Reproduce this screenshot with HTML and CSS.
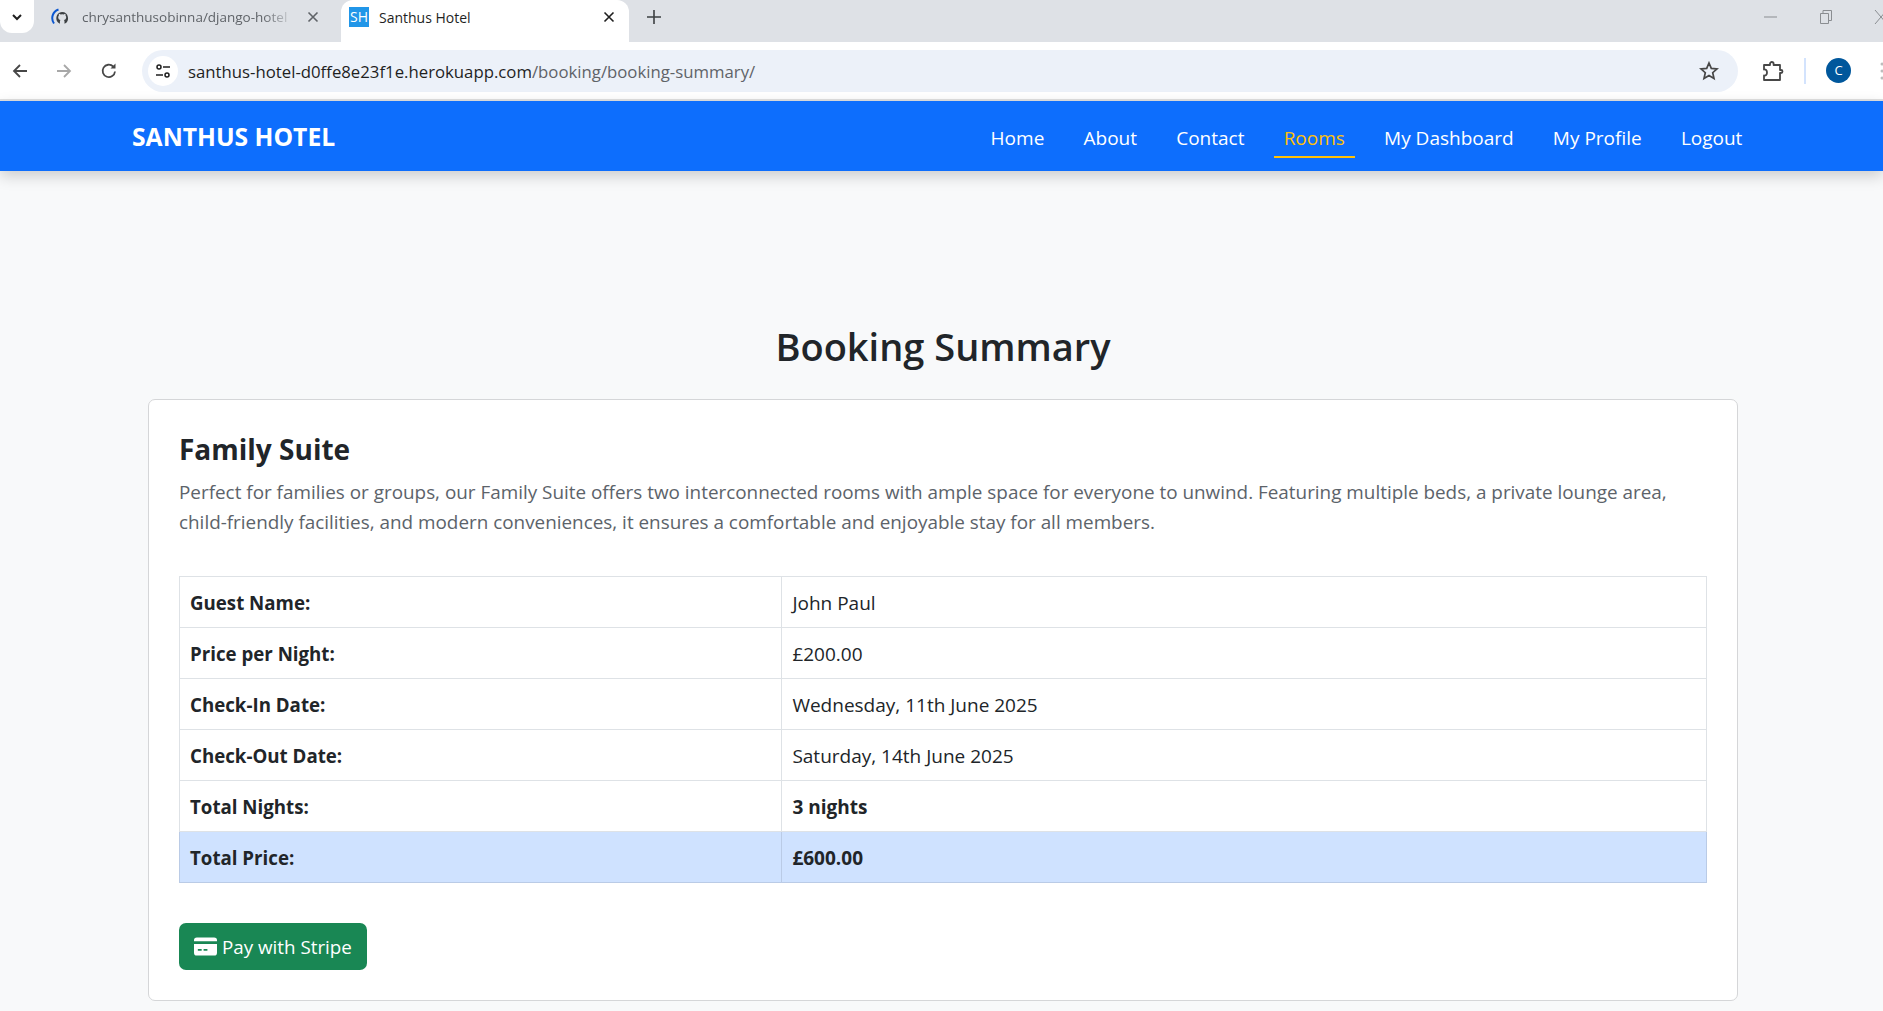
FILE: index.html
```html
<!DOCTYPE html>
<html lang="en">
  <head>
    <meta charset="UTF-8" />
    <meta name="viewport" content="width=device-width, initial-scale=1.0" />
    <title>Santhus Hotel</title>
    <link rel="stylesheet" href="styles.css">
  </head>

  <body>
    <!-- browser chrome -->
    <div class="tabstrip">
      <div class="tab-search">
        <svg width="14" height="14" viewBox="0 0 14 14"><path d="M3 5l4 4 4-4" fill="none" stroke="#1f1f1f" stroke-width="2"/></svg>
      </div>
      <div class="tab">
        <svg class="tab-icon" width="18" height="18" viewBox="0 0 18 18">
          <path d="M3 15.500C-0.500 10.500 1.500 3.500 7.500 1.500" fill="none" stroke="#0b57d0" stroke-width="2"/>
          <path d="M11 4a6.200 6.200 0 0 1 2.500 11.800v-2.300c0-.8-.3-1.300-.7-1.600 1.500-.2 2.400-1 2.400-2.700 0-.8-.3-1.400-.7-1.800.1-.5.1-1.100-.1-1.600-.6 0-1.200.3-1.700.6a6 6 0 0 0-3 0c-.5-.3-1.100-.6-1.700-.6-.2.5-.2 1.100-.1 1.600-.4.400-.7 1-.7 1.800 0 1.700.9 2.500 2.400 2.700-.4.300-.7.800-.7 1.600v2.300A6.200 6.200 0 0 1 11 4z" fill="#3c4043"/>
        </svg>
        <span class="tab-title tab-title-cut">chrysanthusobinna/django-hotel</span>
        <svg class="tab-close" width="12" height="12" viewBox="0 0 12 12"><path d="M1.500 1.500l9 9m0-9l-9 9" stroke="#5f6368" stroke-width="1.600"/></svg>
      </div>
      <div class="tab tab-active">
        <span class="favicon">SH</span>
        <span class="tab-title">Santhus Hotel</span>
        <svg class="tab-close" width="12" height="12" viewBox="0 0 12 12"><path d="M1.500 1.500l9 9m0-9l-9 9" stroke="#1f1f1f" stroke-width="1.600"/></svg>
      </div>
      <svg class="tab-new" width="14" height="14" viewBox="0 0 14 14"><path d="M7 0v14M0 7h14" stroke="#3c4043" stroke-width="1.600"/></svg>
      <div class="window-btns">
        <svg width="14" height="14" viewBox="0 0 14 14"><path d="M0 7h13" stroke="#8a8d91" stroke-width="1"/></svg>
        <svg width="14" height="16" viewBox="0 0 14 16"><path d="M1.500 4.500h8v10h-8zM4 4.500v-3h8.500v10h-3" fill="none" stroke="#8a8d91" stroke-width="1"/></svg>
        <svg width="14" height="18" viewBox="0 0 14 18"><path d="M1 2l12 14" fill="none" stroke="#8a8d91" stroke-width="1"/><path d="M1 16L13 2" fill="none" stroke="#8a8d91" stroke-width="1"/></svg>
      </div>
    </div>

    <div class="toolbar">
      <svg class="tool-btn" width="18" height="18" viewBox="0 0 18 18"><path d="M16 9H3M9 3L3 9l6 6" fill="none" stroke="#474747" stroke-width="1.800"/></svg>
      <svg class="tool-btn" width="18" height="18" viewBox="0 0 18 18"><path d="M2 9h13M9 3l6 6-6 6" fill="none" stroke="#a8a8a8" stroke-width="1.800"/></svg>
      <svg class="tool-btn" width="18" height="18" viewBox="0 0 18 18"><path d="M15 9.500A6.200 6.200 0 1 1 13.200 4.500" fill="none" stroke="#474747" stroke-width="1.800"/><path d="M15.500 1.500v5h-5z" fill="#474747"/></svg>
      <div class="omnibox">
        <span class="site-info">
          <svg width="18" height="18" viewBox="0 0 18 18"><circle cx="5" cy="5" r="2" fill="none" stroke="#1f1f1f" stroke-width="1.500"/><path d="M9 5h7M2 13h7" stroke="#1f1f1f" stroke-width="1.500"/><circle cx="13" cy="13" r="2" fill="none" stroke="#1f1f1f" stroke-width="1.500"/></svg>
        </span>
        <span class="url">santhus-hotel-d0ffe8e23f1e.herokuapp.com<span class="url-path">/booking/booking-summary/</span></span>
        <svg class="star" width="20" height="20" viewBox="0 0 20 20"><path d="M10 2l2.300 5.400 5.700.5-4.300 3.800 1.300 5.700L10 14.400l-5 3 1.300-5.700L2 7.900l5.700-.5z" fill="none" stroke="#474747" stroke-width="1.700"/></svg>
      </div>
      <svg class="ext" width="22" height="22" viewBox="0 0 22 22"><path d="M2 5h6V3.800a1.800 1.800 0 0 1 3.600 0V5H18v5h1a1.500 1.500 0 0 1 0 3h-1v7H2v-4.500c2 .3 3-1 3-3s-1-3.300-3-3z" fill="none" stroke="#474747" stroke-width="1.800" stroke-linejoin="round"/></svg>
      <span class="tool-sep"></span>
      <span class="avatar">C</span>
      <svg class="kebab" width="4" height="18" viewBox="0 0 4 18"><circle cx="3" cy="2" r="1.500" fill="#bdbdbd"/><circle cx="3" cy="9" r="1.500" fill="#bdbdbd"/><circle cx="3" cy="16" r="1.500" fill="#bdbdbd"/></svg>
    </div>

    <!-- site -->
    <nav class="navbar">
      <a class="brand">SANTHUS HOTEL</a>
      <ul class="nav-links">
        <li><a>Home</a></li>
        <li><a>About</a></li>
        <li><a>Contact</a></li>
        <li><a class="active">Rooms</a></li>
        <li><a>My Dashboard</a></li>
        <li><a>My Profile</a></li>
        <li><a>Logout</a></li>
      </ul>
    </nav>

    <div class="main">
      <h1 class="heading">Booking Summary</h1>
      <div class="box">
        <h2 class="room-name">Family Suite</h2>
        <p class="room-text">Perfect for families or groups, our Family Suite offers two interconnected rooms with ample space for everyone to unwind. Featuring multiple beds, a private lounge area, child-friendly facilities, and modern conveniences, it ensures a comfortable and enjoyable stay for all members.</p>
        <table class="summary">
          <tr><th>Guest Name:</th><td>John Paul</td></tr>
          <tr><th>Price per Night:</th><td>£200.00</td></tr>
          <tr><th>Check-In Date:</th><td>Wednesday, 11th June 2025</td></tr>
          <tr><th>Check-Out Date:</th><td>Saturday, 14th June 2025</td></tr>
          <tr><th>Total Nights:</th><td><b>3 nights</b></td></tr>
          <tr class="total"><th>Total Price:</th><td><b>£600.00</b></td></tr>
        </table>
        <button class="pay-btn">
          <svg width="23" height="19" viewBox="0 0 24 19"><path d="M0 3a3 3 0 0 1 3-3h18a3 3 0 0 1 3 3v1H0zM0 7h24v9a3 3 0 0 1-3 3H3a3 3 0 0 1-3-3zM4 12v2h4v-2zM10 12v2h4v-2z" fill="#fff" fill-rule="evenodd"/></svg>
          Pay with Stripe
        </button>
      </div>
    </div>
  </body>
</html>
```

FILE: styles.css
```css
* {
  padding: 0;
  margin: 0;
  box-sizing: border-box;
}

body {
  height: 1011px;
  overflow: hidden;
  background-color: #f8f9fa;
  font-family: "Open Sans", sans-serif;
  color: #212529;
}

/* browser chrome */
.tabstrip {
  height: 42px;
  display: flex;
  align-items: center;
  background-color: #dee1e6;
  overflow: hidden;
}
.tab-search {
  width: 34px;
  height: 33px;
  margin-top: -9px;
  display: flex;
  align-items: center;
  justify-content: center;
  background: #fff;
  border-radius: 0 0 12px 12px;
}
.tab {
  height: 42px;
  width: 307px;
  padding: 0 22px 8px 17px;
  display: flex;
  align-items: center;
  font-size: 13.500px;
  color: #5f6368;
}
.tab-active {
  width: 288px;
  padding: 0 14px 8px 8px;
  font-size: 14px;
  background: #fff;
  color: #1f1f1f;
  border-radius: 12px 12px 0 0;
}
.tab-icon {
  margin-right: 13px;
  flex: none;
}
.favicon {
  width: 20px;
  height: 20px;
  flex: none;
  margin-right: 10px;
  background: #2196e8;
  color: #fff;
  font-size: 14px;
  line-height: 20px;
  text-align: center;
}
.tab-title {
  flex: 1;
  white-space: nowrap;
  overflow: hidden;
}
.tab-title-cut {
  -webkit-mask-image: linear-gradient(to right, #000 85%, transparent);
  mask-image: linear-gradient(to right, #000 85%, transparent);
}
.tab-close {
  flex: none;
  margin-left: 12px;
}
.tab-new {
  margin-left: 18px;
  margin-bottom: 8px;
}
.window-btns {
  margin-left: auto;
  margin-right: -5px;
  display: flex;
  align-items: center;
  gap: 41px;
  padding-bottom: 9px;
}

.toolbar {
  height: 59px;
  display: flex;
  align-items: center;
  background: #fff;
  border-bottom: 2px solid #e0e0e0;
  padding-left: 11px;
  overflow: hidden;
}
.tool-btn {
  margin-right: 26px;
  flex: none;
}
.toolbar .tool-btn:nth-child(2) {
  margin-right: 27px;
}
.toolbar .tool-btn:nth-child(3) {
  margin-right: 24px;
}
.omnibox {
  flex: none;
  width: 1596px;
  height: 42px;
  background: #ecf1f9;
  border-radius: 21px;
  display: flex;
  align-items: center;
  padding: 0 19px 0 6px;
  font-size: 16.750px;
}
.site-info {
  width: 30px;
  height: 30px;
  background: #fff;
  border-radius: 50%;
  display: flex;
  align-items: center;
  justify-content: center;
  margin-right: 10px;
}
.url {
  flex: 1;
  color: #1f1f1f;
  white-space: nowrap;
  padding-top: 2px;
}
.url-path {
  color: #5f6368;
}
.ext {
  flex: none;
  margin-left: 24px;
}
.tool-sep {
  flex: none;
  width: 2px;
  height: 26px;
  background: #d3e3fd;
  margin-left: 20px;
}
.avatar {
  flex: none;
  width: 25px;
  height: 25px;
  margin-left: 20px;
  border-radius: 50%;
  background: #00579c;
  color: #fff;
  font-size: 13px;
  line-height: 25px;
  text-align: center;
}
.kebab {
  flex: none;
  margin-left: 28px;
}

/* navbar */
.navbar {
  height: 70px;
  background-color: #0d6efd;
  box-shadow: 0 5px 14px rgb(0 0 0 / 18%);
  display: flex;
  align-items: center;
  justify-content: space-between;
  padding: 0 121px 0 132px;
  color: #fff;
  position: relative;
}
.brand {
  font-size: 24.700px;
  font-weight: 700;
}
.nav-links {
  display: flex;
  list-style: none;
  font-size: 19px;
  margin-top: 5px;
}
.nav-links a {
  display: block;
  padding: 6px 10px 5px;
  margin: 0 9.600px;
  border-bottom: 2px solid transparent;
}
.nav-links a.active {
  color: #ffc107;
  border-bottom-color: #ffc107;
}

.main {
  padding: 152px 145px 0 148px;
}
.heading {
  text-align: center;
  font-size: 38px;
  font-weight: 600;
  line-height: 46px;
  margin-bottom: 30px;
}
.box {
  background: #fff;
  border: 1px solid #d5d6d8;
  border-radius: 7px;
  padding: 30px;
  height: 602px;
}
.room-name {
  font-size: 28px;
  font-weight: 700;
  line-height: 38px;
  margin-bottom: 9px;
}
.room-text {
  font-size: 18.890px;
  line-height: 30px;
  color: #5c636a;
  margin-bottom: 39px;
}
.summary {
  width: 100%;
  border-collapse: collapse;
  font-size: 19px;
  margin-bottom: 40px;
}
.summary th,
.summary td {
  height: 51px;
  padding: 1px 10px 0;
  border: 1px solid #dee2e6;
  text-align: left;
}
.summary th {
  width: 39.450%;
  font-weight: 700;
  font-size: 18.700px;
}
.summary .total th,
.summary .total td {
  background: #cfe2ff;
  border-color: #bacbe6;
}
.pay-btn {
  display: flex;
  align-items: center;
  gap: 5px;
  height: 47px;
  padding: 0 15px;
  background: #198754;
  border: 0;
  border-radius: 7px;
  color: #fff;
  font-family: inherit;
  font-size: 18.800px;
}
```
